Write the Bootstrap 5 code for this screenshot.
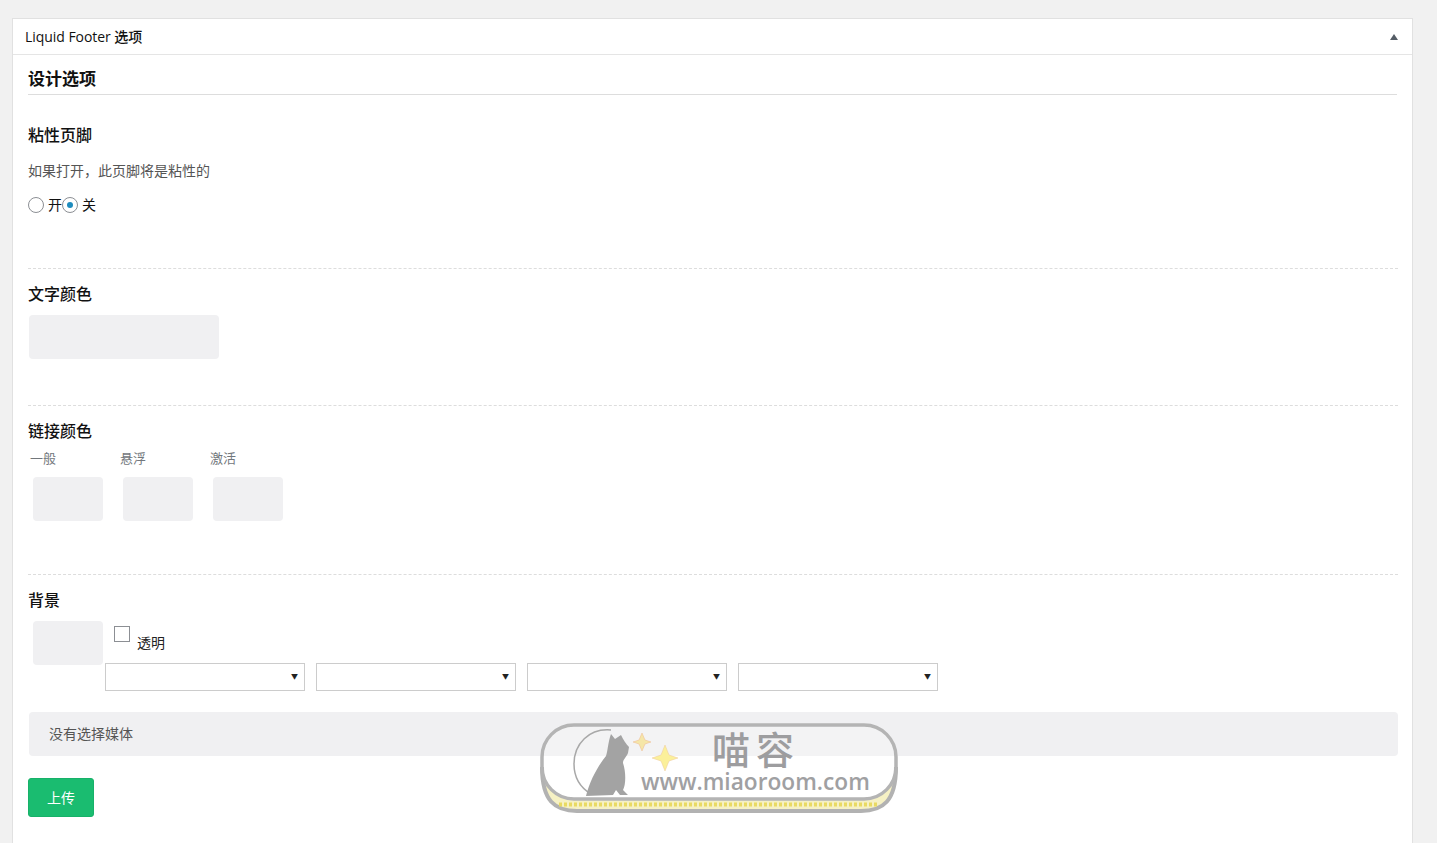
<!DOCTYPE html>
<html lang="zh-CN">
<head>
<meta charset="utf-8">
<title>Liquid Footer 选项</title>
<link href="https://cdn.jsdelivr.net/npm/bootstrap@5.3.0/dist/css/bootstrap.min.css" rel="stylesheet">
<style>
html,body{height:843px;overflow:hidden}
body{background:#f1f1f1;font-family:"Open Sans","Noto Sans CJK SC",sans-serif;font-size:14px;color:#444;padding:18px 24px 0 12px;position:relative}
.panel-box{background:#fff;border:1px solid #e1e1e1;border-bottom:0;height:825px}
.panel-head{height:36px;padding:0 14px 0 12px;border-bottom:1px solid #e5e5e5;font-size:14px;color:#111;font-weight:500;letter-spacing:-.05px}
.panel-arrow{width:0;height:0;border-left:4px solid transparent;border-right:4px solid transparent;border-bottom:6px solid #555d66}
.panel-body{padding:0 15px}
.design-title{font-size:17px;font-weight:700;color:#111;line-height:24px;margin:12px 0 0;padding-bottom:3px;border-bottom:1px solid #ddd}
.opt{border-bottom:1px dashed #ddd;margin-right:-1px}
.opt-sticky{height:174px;padding-top:28px}
.opt-text{height:137px;padding-top:13px}
.opt-link{height:169px;padding-top:13px}
.opt-title{font-size:16px;font-weight:500;color:#111;line-height:24px;margin:0}
.opt-desc{color:#555;line-height:20px;margin:14px 0 0}
.radio-row{margin-top:15px;line-height:18px;color:#111}
.fake-radio{width:16px;height:16px;border:1px solid #8c8f94;border-radius:50%;background:#fff;flex:none;margin-right:4px}
.fake-radio.on::after{content:"";width:6px;height:6px;border-radius:50%;background:#1e8cbe}
.swatch{background:#f0f0f2;border-radius:4px;height:44px}
.swatch-wide{width:190px;margin:9px 0 0 1px}
.swatch-small{width:70px;margin:10px 0 0 5px}
.link-col{width:90px}
.link-label{color:#72777c;font-size:13px;line-height:18px;padding:6px 0 0 2px}
.bg-title{margin-top:13px}
.bg-row{margin-top:9px;height:44px}
.bg-swatch{margin:0 0 0 5px}
.fake-check{width:16px;height:16px;border:1px solid #8c8f94;background:#fff;margin:5px 0 0 11px;flex:none}
.check-label{color:#222;margin:13px 0 0 7px;line-height:18px}
.select-row{margin:-2px 0 0 77px;gap:11px}
.fake-select{width:200px;height:28px;border:1px solid #ccc;background:#fff;padding-right:6px;font-size:7px;color:#222}
.media-bar{background:#f0f0f2;height:44px;margin:21px -1px 0 1px;padding:0 0 2px 20px;color:#555;border-radius:4px}
.upload-btn{margin-top:22px;width:66px;height:39px;padding:0;background:#1abc70;border:1px solid #17b169;color:#fff;font-size:14px;border-radius:3px}
.wm-box{position:absolute;left:539px;top:722px;width:360px;height:92px}
.wm-svg{overflow:visible;display:block}
.wm-t1{font-family:"Noto Sans CJK SC",sans-serif;font-size:38px;fill:#9d9d9f;letter-spacing:6px;font-weight:500}
.wm-t2{font-family:"Open Sans",sans-serif;font-size:22.7px;fill:#a0a0a2;font-weight:600}
</style>
</head>
<body>
<div class="panel-box">
  <div class="panel-head d-flex align-items-center justify-content-between">
    <span>Liquid Footer 选项</span><span class="panel-arrow"></span>
  </div>
  <div class="panel-body">
    <h3 class="design-title">设计选项</h3>
    <div class="opt opt-sticky">
      <h4 class="opt-title">粘性页脚</h4>
      <p class="opt-desc">如果打开，此页脚将是粘性的</p>
      <div class="radio-row d-flex align-items-center">
        <span class="fake-radio"></span><span>开</span>
        <span class="fake-radio on d-inline-flex align-items-center justify-content-center"></span><span>关</span>
      </div>
    </div>
    <div class="opt opt-text">
      <h4 class="opt-title">文字颜色</h4>
      <div class="swatch swatch-wide"></div>
    </div>
    <div class="opt opt-link">
      <h4 class="opt-title">链接颜色</h4>
      <div class="d-flex">
        <div class="link-col"><div class="link-label">一般</div><div class="swatch swatch-small"></div></div>
        <div class="link-col"><div class="link-label">悬浮</div><div class="swatch swatch-small"></div></div>
        <div class="link-col"><div class="link-label">激活</div><div class="swatch swatch-small"></div></div>
      </div>
    </div>
    <h4 class="opt-title bg-title">背景</h4>
    <div class="bg-row d-flex">
      <div class="swatch swatch-small bg-swatch"></div>
      <span class="fake-check"></span>
      <span class="check-label">透明</span>
    </div>
    <div class="select-row d-flex">
      <div class="fake-select d-flex align-items-center justify-content-end">▼</div>
      <div class="fake-select d-flex align-items-center justify-content-end">▼</div>
      <div class="fake-select d-flex align-items-center justify-content-end">▼</div>
      <div class="fake-select d-flex align-items-center justify-content-end">▼</div>
    </div>
    <div class="media-bar d-flex align-items-center">没有选择媒体</div>
    <button type="button" class="btn upload-btn d-block">上传</button>
  </div>
</div>
<div class="wm-box">
  <svg class="wm-svg" width="360" height="92" viewBox="0 0 360 92">
    <rect x="3" y="3" width="354" height="74" rx="32" fill="#fff" fill-opacity=".2"/>
    <path d="M3 45 C3 79 16 89 38 89 H322 C344 89 357 79 357 45 A32 32 0 0 1 325 77 H35 A32 32 0 0 1 3 45 Z" fill="#f6f1c4"/>
    <path d="M3 45 C3 79 16 89 38 89 H322 C344 89 357 79 357 45" fill="none" stroke="#b2b2b2" stroke-width="4"/>
    <rect x="3" y="3" width="354" height="74" rx="32" fill="none" stroke="#b4b4b4" stroke-width="3.5"/>
    <path d="M20 82.5 H340" stroke="#e9da62" stroke-width="4" stroke-dasharray="3 2"/>
    <path d="M72 8 C50 6 35 22 35 42 C35 56 42 66 52 72" fill="none" stroke="#a8a8a8" stroke-width="1.5"/>
    <path d="M47 74 C51 58 59 44 67 34 C69 28 69 20 72 12 L76 17 L82 13 C84 17 87 22 90 25 L89 31 C87 36 84 37 84 41 C87 50 87 62 84 68 L89 73 H81 L77 68 L74 73 Z" fill="#a3a3a3"/>
    <path d="M103 11 L106 18 L112 20 L106 22 L103 29 L100 22 L94 20 L100 18 Z" fill="#f5e6a8" stroke="#eeb98e" stroke-width=".5"/>
    <path d="M126 23 L130 33 L139 36 L130 39 L126 49 L122 39 L113 36 L122 33 Z" fill="#fbf09a" stroke="#eec89a" stroke-width=".5"/>
    <text class="wm-t1" x="173" y="42">喵容</text>
    <text class="wm-t2" x="102" y="68">www.miaoroom.com</text>
  </svg>
</div>
</body>
</html>
